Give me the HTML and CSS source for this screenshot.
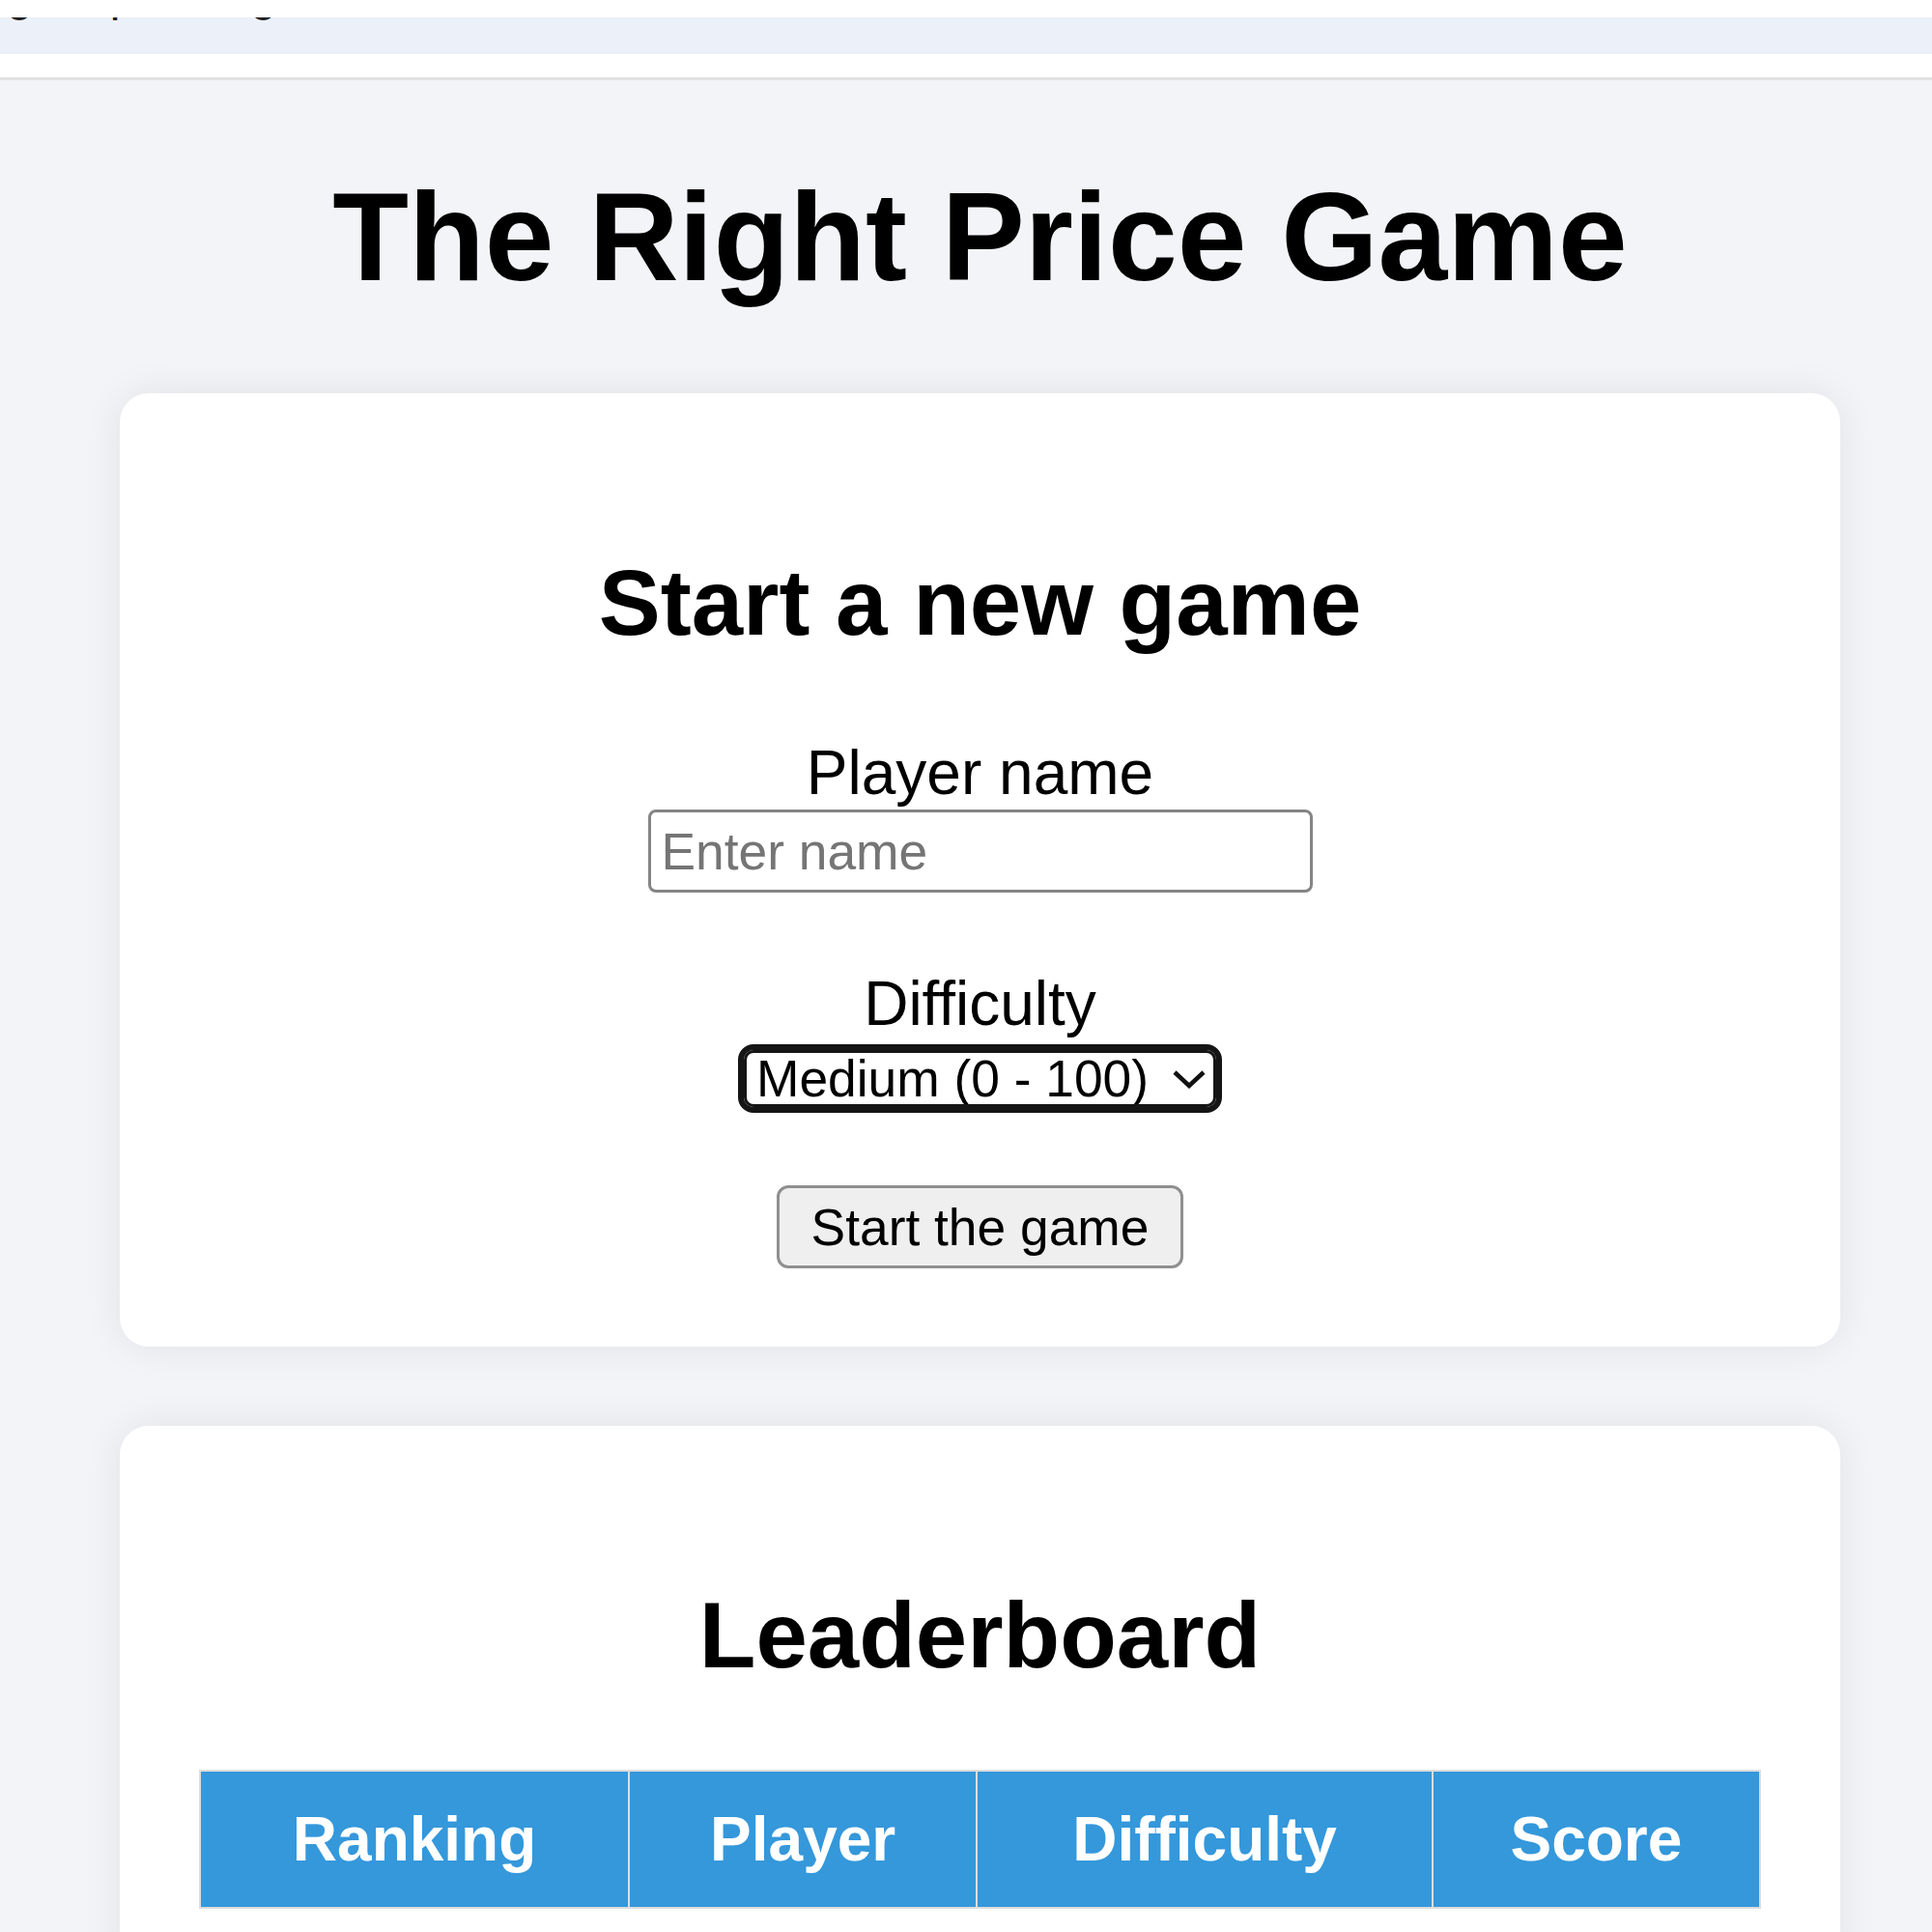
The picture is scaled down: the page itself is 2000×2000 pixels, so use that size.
FILE: index.html
```html
<!DOCTYPE html>
<html lang="en">
<head>
    <meta charset="UTF-8">
    <title>The Right Price Game</title>
    <link rel="stylesheet" href="styles.css">
</head>
<body>
<div class="browser-bar">
    <div class="bookmarks">
        <span class="bm bm-1">g</span>
        <span class="bm bm-2">p</span>
        <span class="bm bm-3">g</span>
    </div>
</div>
<div class="page">
    <h1 class="title">The Right Price Game</h1>

    <section class="card">
        <h2>Start a new game</h2>
        <form class="new-game">
            <div class="field">
                <label for="player">Player name</label>
                <input type="text" id="player" class="name-input" placeholder="Enter name">
            </div>
            <div class="field">
                <label for="difficulty">Difficulty</label>
                <span class="select-wrap">
                    <select id="difficulty" class="level">
                        <option>Easy (0 - 10)</option>
                        <option selected>Medium (0 - 100)</option>
                        <option>Hard (0 - 1000)</option>
                    </select>
                    <svg class="chevron" width="36" height="20" viewBox="0 0 36 20">
                        <polyline points="3,3 18,17 33,3" fill="none" stroke="#111" stroke-width="4.5"/>
                    </svg>
                </span>
            </div>
            <button type="button" class="start-btn">Start the game</button>
        </form>
    </section>

    <section class="card">
        <h2>Leaderboard</h2>
        <table class="board">
            <thead>
            <tr>
                <th class="col-rank">Ranking</th>
                <th class="col-player">Player</th>
                <th class="col-diff">Difficulty</th>
                <th class="col-score">Score</th>
            </tr>
            </thead>
            <tbody></tbody>
        </table>
    </section>
</div>
</body>
</html>
```

FILE: styles.css
```css
*{
    margin: 0;
    padding: 0;
    box-sizing: border-box;
}
body{
    background: #f3f4f8;
    font-family: "Liberation Sans", Arial, sans-serif;
    color: #000;
}
/* top of the browser window */
.browser-bar{
    background: #fff;
    padding: 18px 0 24px;
    border-bottom: 3px solid #e2e2e2;
}
.bookmarks{
    height: 38px;
    background: #ebf0f9;
    overflow: hidden;
    display: flex;
    align-items: flex-start;
}
.bm{
    font-size: 48px;
    line-height: 40px;
    margin-top: -43px;
    color: #222;
}
.bm-1{ margin-left: 7px; }
.bm-2{ margin-left: 80px; }
.bm-3{ margin-left: 119px; }

.page{
    padding: 0 95px 0 124px;
}
.title{
    font-size: 129px;
    font-weight: 700;
    text-align: center;
    margin: 88px 0;
}
.card{
    background: #fff;
    border-radius: 30px;
    box-shadow: 0 0 40px rgba(0, 0, 0, 0.08);
    padding: 80px 82px 81px;
    margin-bottom: 82px;
    text-align: center;
}
.card h2{
    font-size: 96px;
    font-weight: 700;
    margin: 82px 0 84px;
}
.new-game{
    display: flex;
    flex-direction: column;
    align-items: center;
}
.field{
    display: flex;
    flex-direction: column;
    align-items: center;
    margin-bottom: 78px;
}
.field:last-of-type{
    margin-bottom: 0;
}
.field label{
    font-size: 64px;
}
.name-input{
    margin-top: 1px;
    width: 688px;
    height: 86px;
    padding: 0 11px;
    border: 3px solid #858585;
    border-radius: 8px;
    font-family: "Liberation Sans", Arial, sans-serif;
    font-size: 53.33px;
    color: #000;
    background: #fff;
}
.name-input::placeholder{
    color: #757575;
}
.select-wrap{
    position: relative;
    display: inline-block;
    margin-top: 11px;
}
.level{
    appearance: none;
    -webkit-appearance: none;
    width: 489px;
    height: 59px;
    padding: 0 50px 0 10px;
    border: 3px solid #151515;
    outline: 6px solid #151515;
    border-radius: 10px;
    background: #fff;
    font-family: "Liberation Sans", Arial, sans-serif;
    font-size: 53.33px;
    line-height: 53px;
    color: #000;
    display: block;
}
.chevron{
    position: absolute;
    right: 10px;
    top: 20px;
    pointer-events: none;
}
.start-btn{
    margin-top: 81px;
    height: 86px;
    padding: 0 33px;
    border: 3px solid #8f8f8f;
    border-radius: 12px;
    background: #efefef;
    font-family: "Liberation Sans", Arial, sans-serif;
    font-size: 53.33px;
    color: #000;
}
.board{
    width: 100%;
    border-collapse: collapse;
    table-layout: fixed;
}
.board th{
    background: #3498db;
    color: #fff;
    font-size: 64px;
    font-weight: 700;
    padding: 33px 16px;
    border: 2px solid #dddddd;
    text-align: center;
}
.col-rank{ width: 27.5%; }
.col-player{ width: 22.3%; }
.col-diff{ width: 29.2%; }
.col-score{ width: 21%; }
```
